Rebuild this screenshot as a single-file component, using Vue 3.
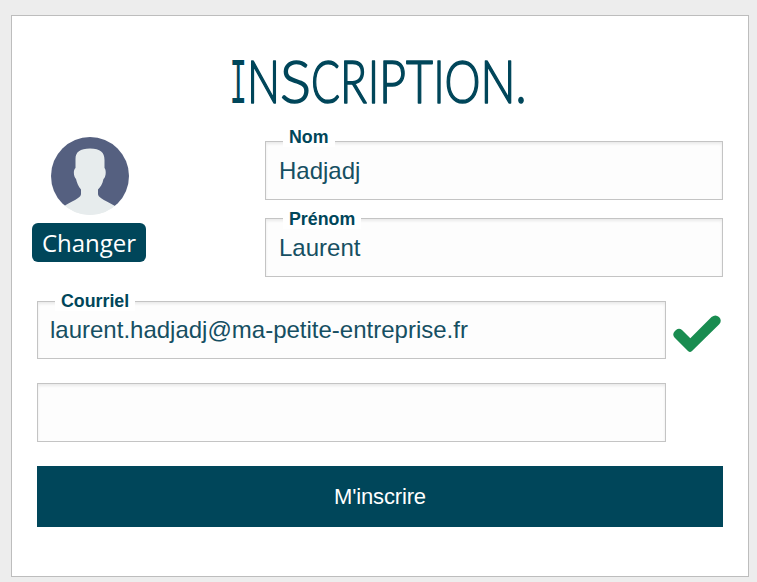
<script setup>
import { ref } from 'vue'

const nom = ref('Hadjadj')
const prenom = ref('Laurent')
const courriel = ref('laurent.hadjadj@ma-petite-entreprise.fr')
const code = ref('')

const letters = [
  { c: 'I', x: 229.5, w: 17.5, mono: true },
  { c: 'N', x: 247, w: 33 },
  { c: 'S', x: 280, w: 31 },
  { c: 'C', x: 311, w: 29 },
  { c: 'R', x: 340, w: 27 },
  { c: 'I', x: 368, w: 11 },
  { c: 'P', x: 379, w: 27 },
  { c: 'T', x: 406, w: 27 },
  { c: 'I', x: 433.5, w: 11 },
  { c: 'O', x: 444.5, w: 36 },
  { c: 'N', x: 480.5, w: 35 },
  { c: '.', x: 515.5, w: 11 },
]
</script>

<template>
  <main class="card">
    <h1 class="title">
      <svg width="686" height="90" viewBox="37 36 686 90">
        <text y="103"><tspan
          v-for="(l, i) in letters"
          :key="i"
          :x="l.x"
          :textLength="l.w"
          lengthAdjust="spacingAndGlyphs"
          :class="{ mono: l.mono }"
        >{{ l.c }}</tspan></text>
      </svg>
    </h1>

    <section class="identity">
      <div class="profile">
        <svg class="avatar" width="78" height="78" viewBox="0 0 78 78">
          <path
            fill="#e7eced"
            d="M24.5 31 L24.5 22 C24.5 15 29 11.5 39 11.5 C49.5 11.5 53.5 15.500 53.5 23 L53.500 31 C55.500 33 55 40 52.500 42 C51.500 47 49.500 50 47 52.500 L47 57 C47 60 51 62 64 69 L64 80 L13 80 L13 69 C26 62 30 60 30 57 L30 52.500 C27.500 50 26 46 25 42 C22.500 40 22 33 24.500 31 Z"
          />
        </svg>
        <button class="change" type="button">Changer</button>
      </div>
      <div class="names">
        <label class="field">
          <span class="caption">Nom</span>
          <input v-model="nom" type="text" />
        </label>
        <label class="field">
          <span class="caption low">Prénom</span>
          <input v-model="prenom" type="text" />
        </label>
      </div>
    </section>

    <section class="mail">
      <label class="field">
        <span class="caption">Courriel</span>
        <input v-model="courriel" type="text" />
      </label>
      <svg class="check" width="48" height="38" viewBox="0 0 48 38">
        <path
          fill="#198c50"
          d="M1.500 16.500 L3 15 Q6 12.500 9 15 L17.300 23.200 L38.500 2 Q42.500 -1.200 46 2 Q49.500 5.500 46 9.500 L19 36 Q17 37.800 15 36 L1.500 22.500 Q-1 19.500 1.500 16.500 Z"
        />
      </svg>
    </section>

    <label class="field code">
      <input v-model="code" type="text" />
    </label>

    <button class="submit" type="button">M'inscrire</button>
  </main>
</template>

<style>
body {
  background: #ededed;
}
</style>

<style scoped>
.card {
  box-sizing: border-box;
  width: 738px;
  height: 562px;
  margin: 15px 0 0 11px;
  padding: 20px 25px 0;
  background: #fff;
  border: 1px solid #bdbdbd;
  color: #00465a;
  font-family: "Liberation Sans", Arial, sans-serif;
}
.title {
  margin: 0;
  height: 105px;
}
.title svg {
  display: block;
  overflow: visible;
}
.title text {
  font: 300 59px Lato, sans-serif;
  fill: #00465a;
  stroke: #00465a;
  stroke-width: 1.6;
  stroke-linejoin: round;
}
.title .mono {
  font: 400 65px "Liberation Mono", monospace;
  stroke-width: 0;
}
.identity {
  display: flex;
  height: 160px;
}
.profile {
  display: flex;
  flex-direction: column;
  align-items: center;
  width: 114px;
  margin: -4px 119px 0 -5px;
}
.avatar {
  margin-left: 2px;
  border-radius: 50%;
  overflow: hidden;
  background: linear-gradient(#556080 89%, #e7eced 89%);
}
.change {
  width: 114px;
  height: 39px;
  margin-top: 8px;
  padding: 0 0 1px;
  border: 0;
  border-radius: 6px;
  background: #00465a;
  color: #fff;
  font: 24px "Open Sans", sans-serif;
}
.names {
  display: flex;
  flex-direction: column;
  gap: 18px;
  width: 458px;
}
.field {
  display: block;
  position: relative;
  flex: none;
  height: 59px;
}
.field input {
  box-sizing: border-box;
  display: block;
  width: 100%;
  height: 100%;
  margin: 0;
  padding: 0 13px;
  border: 1px solid #c4c4c4;
  border-radius: 0;
  outline: 0;
  background: #fdfdfd;
  box-shadow: inset 0 2px 3px rgba(0, 0, 0, 0.08);
  color: #164f62;
  font: 24px "Liberation Sans", Arial, sans-serif;
}
.caption {
  position: absolute;
  top: -14px;
  left: 18px;
  padding: 0 6px;
  background: #fff;
  font-size: 17.8px;
  font-weight: 700;
  line-height: 20px;
}
.caption.low {
  top: -9px;
}
.mail {
  display: flex;
  height: 82px;
}
.mail .field {
  width: 629px;
  height: 58px;
}
.mail .field input {
  padding-left: 12px;
}
.mail .caption {
  top: -10px;
}
.check {
  margin: 14px 0 0 7px;
}
.code {
  width: 629px;
}
.submit {
  display: block;
  width: 686px;
  height: 61px;
  margin-top: 24px;
  padding: 0;
  border: 0;
  background: #00465a;
  color: #fff;
  font: 22px "Liberation Sans", Arial, sans-serif;
  letter-spacing: -0.15px;
}
</style>
